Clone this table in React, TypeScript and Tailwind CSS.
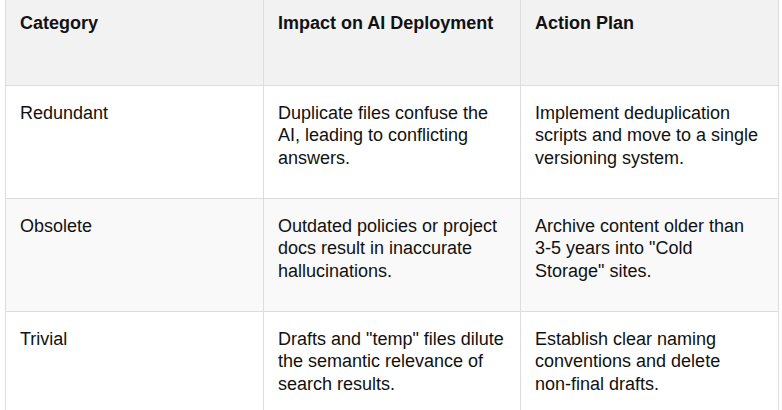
import type { ReactNode } from "react";

type Row = {
  category: string;
  impact: ReactNode;
  action: ReactNode;
};

const ROWS: Row[] = [
  {
    category: "Redundant",
    impact: "Duplicate files confuse the AI, leading to conflicting answers.",
    action: "Implement deduplication scripts and move to a single versioning system.",
  },
  {
    category: "Obsolete",
    impact: "Outdated policies or project docs result in inaccurate hallucinations.",
    action: 'Archive content older than 3-5 years into "Cold Storage" sites.',
  },
  {
    category: "Trivial",
    impact: 'Drafts and "temp" files dilute the semantic relevance of search results.',
    action: (
      <>
        Establish clear naming conventions and delete <span className="whitespace-nowrap">non-final</span> drafts.
      </>
    ),
  },
];

export default function App() {
  return (
    <div
      className="min-h-screen bg-white pl-[5px] text-[#111] text-[18px] leading-[22.5px]"
      style={{ fontFamily: '"Liberation Sans", Arial, sans-serif' }}
    >
      <table className="w-[773px] border-collapse table-fixed">
        <colgroup>
          <col className="w-[258px]" />
          <col className="w-[257px]" />
          <col className="w-[258px]" />
        </colgroup>
        <thead>
          <tr className="bg-[#f2f2f2] h-[85px]">
            <th className="border-x border-b border-[#dddddd] px-[14px] pt-[12px] align-top text-left font-bold">
              Category
            </th>
            <th className="border-x border-b border-[#dddddd] px-[14px] pt-[12px] align-top text-left font-bold">
              Impact on AI Deployment
            </th>
            <th className="border-x border-b border-[#dddddd] px-[14px] pt-[12px] align-top text-left font-bold">
              Action Plan
            </th>
          </tr>
        </thead>
        <tbody>
          {ROWS.map((r, i) => (
            <tr key={r.category} className={`h-[113px] ${i % 2 === 1 ? "bg-[#f9f9f9]" : "bg-white"}`}>
              <td className="border border-[#dddddd] px-[14px] pt-[16px] align-top">{r.category}</td>
              <td className="border border-[#dddddd] px-[14px] pt-[16px] align-top">{r.impact}</td>
              <td className="border border-[#dddddd] px-[14px] pt-[16px] align-top">{r.action}</td>
            </tr>
          ))}
        </tbody>
      </table>
    </div>
  );
}
